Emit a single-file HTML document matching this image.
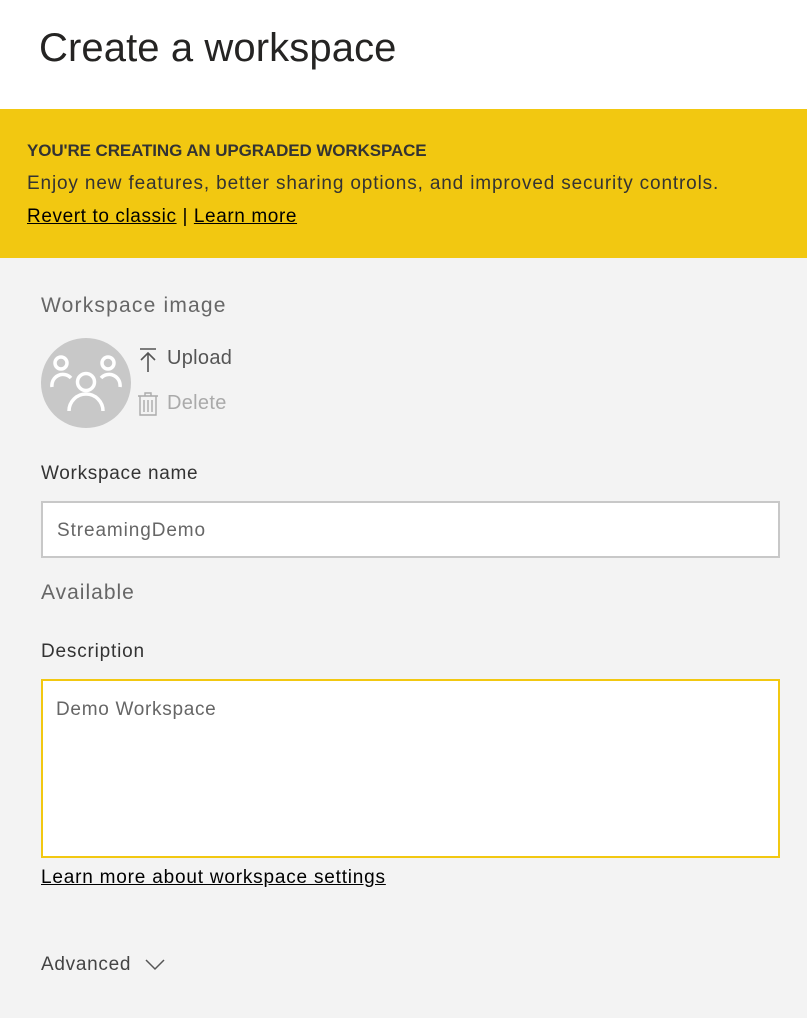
<!DOCTYPE html>
<html><head><style>
body{margin:0;width:807px;height:1018px;background:#f3f3f3;font-family:"Liberation Sans",sans-serif;overflow:hidden;position:relative}
.a{position:absolute;white-space:nowrap}
</style></head><body>
<div class="a" style="left:0;top:0;width:807px;height:109px;background:#fff"></div>
<div class="a" style="left:39px;top:26px;font-size:40px;color:#252423;letter-spacing:0.1px">Create a workspace</div>
<div class="a" style="left:0;top:109px;width:807px;height:149px;background:#f2c811"></div>
<div class="a" style="left:27px;top:141px;font-size:17px;font-weight:bold;color:#333;letter-spacing:-0.1px">YOU'RE CREATING AN UPGRADED WORKSPACE</div>
<div class="a" style="left:27px;top:173px;font-size:19px;color:#333;letter-spacing:0.85px">Enjoy new features, better sharing options, and improved security controls.</div>
<div class="a" style="left:27px;top:206px;font-size:19px;color:#000;letter-spacing:0.6px"><u>Revert to classic</u> | <u>Learn more</u></div>
<div class="a" style="left:41px;top:294px;font-size:21px;color:#666;letter-spacing:1.2px">Workspace image</div>
<div class="a" style="left:41px;top:338px;width:90px;height:90px;border-radius:50%;background:#c8c8c8"></div>
<svg class="a" style="left:41px;top:338px" width="90" height="90" fill="none" stroke="#fff" stroke-width="3.5">
<circle cx="20" cy="25" r="6"/><circle cx="67" cy="25" r="6"/><circle cx="45" cy="44" r="8.5"/>
<path d="M11 49a11 11 0 0 1 19-9M79 49a11 11 0 0 0-19-9M28 73a17 17 0 0 1 34 0"/></svg>
<svg class="a" style="left:138px;top:347px" width="20" height="26" stroke="#555" stroke-width="1.6" fill="none"><path d="M2 2h16M10 6v19M3 13l7-7 7 7"/></svg>
<div class="a" style="left:167px;top:347px;font-size:20px;color:#555;letter-spacing:0.3px">Upload</div>
<svg class="a" style="left:137px;top:391px" width="22" height="26" stroke="#aaa" stroke-width="1.4" fill="none"><path d="M1 5h20M8 5V2h6v3M3 5v19h16V5M7 9v12M11 9v12M15 9v12"/></svg>
<div class="a" style="left:167px;top:392px;font-size:20px;color:#aaa;letter-spacing:0.3px">Delete</div>
<div class="a" style="left:41px;top:463px;font-size:19px;color:#333;letter-spacing:0.7px">Workspace name</div>
<div class="a" style="left:41px;top:501px;width:735px;height:53px;background:#fff;border:2px solid #c8c8c8"></div>
<div class="a" style="left:57px;top:520px;font-size:19px;color:#666;letter-spacing:0.9px">StreamingDemo</div>
<div class="a" style="left:41px;top:581px;font-size:21px;color:#666;letter-spacing:1px">Available</div>
<div class="a" style="left:41px;top:641px;font-size:19px;color:#333;letter-spacing:0.8px">Description</div>
<div class="a" style="left:41px;top:679px;width:735px;height:175px;background:#fff;border:2px solid #f2c811"></div>
<div class="a" style="left:56px;top:699px;font-size:19px;color:#666;letter-spacing:0.7px">Demo Workspace</div>
<div class="a" style="left:41px;top:867px;font-size:19px;color:#000;letter-spacing:0.8px"><u>Learn more about workspace settings</u></div>
<div class="a" style="left:41px;top:954px;font-size:19px;color:#444;letter-spacing:0.7px">Advanced</div>
<svg class="a" style="left:145px;top:957px" width="20" height="14" stroke="#555" stroke-width="1.5" fill="none"><path d="M1 3l9 9 9-9"/></svg>
</body></html>
